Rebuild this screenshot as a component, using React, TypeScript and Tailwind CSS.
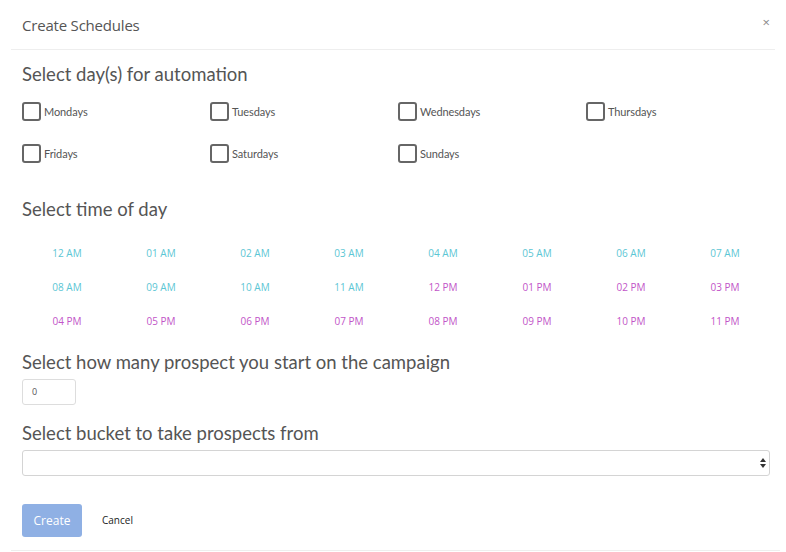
import React from "react";

const days1 = ["Mondays", "Tuesdays", "Wednesdays", "Thursdays"];
const days2 = ["Fridays", "Saturdays", "Sundays"];
const times = [
  "12 AM","01 AM","02 AM","03 AM","04 AM","05 AM","06 AM","07 AM",
  "08 AM","09 AM","10 AM","11 AM","12 PM","01 PM","02 PM","03 PM",
  "04 PM","05 PM","06 PM","07 PM","08 PM","09 PM","10 PM","11 PM",
];

const heading = "text-[18.5px] text-[#555555] leading-[24px]";
const lato = { fontFamily: 'Lato, "Open Sans", sans-serif' };

function Day({ label }: { label: string }) {
  return (
    <div className="flex items-center h-[20px]">
      <span className="w-[19px] h-[19px] border-2 border-[#666666] rounded-[3px] box-border" />
      <span className="ml-[3px] text-[11px] text-[#555555] leading-none tracking-[-0.1px]" style={lato}>{label}</span>
    </div>
  );
}

export default function App() {
  return (
    <div
      className="w-[786px] h-[552px] bg-white relative overflow-hidden"
      style={{ fontFamily: '"Open Sans", "Noto Sans", sans-serif' }}
    >
      <div className="h-[50px] mx-[11px] border-b border-[#eeeeee] flex items-center px-[11px] relative">
        <span className="text-[15px] text-[#555555] tracking-[-0.2px] mt-[1px]">Create Schedules</span>
        <span className="absolute right-[5px] top-[13px] text-[13px] text-[#888888]">×</span>
      </div>
      <div className="px-[22px]">
        <div className={`mt-[12px] ${heading}`} style={lato}>Select day(s) for automation</div>
        <div className="grid grid-cols-4 w-[752px] mt-[15px]">
          {days1.map((d) => <Day key={d} label={d} />)}
        </div>
        <div className="grid grid-cols-4 w-[752px] mt-[22px]">
          {days2.map((d) => <Day key={d} label={d} />)}
        </div>
        <div className={`mt-[34px] ${heading}`} style={lato}>Select time of day</div>
        <div className="grid grid-cols-8 w-[752px] -ml-[2px] mt-[25px] gap-y-[20px]">
          {times.map((t) => (
            <div
              key={t}
              className={`text-center text-[10px] leading-[14px] ${t.endsWith("AM") ? "text-[#5cc6d4]" : "text-[#c255c8]"}`}
            >
              {t}
            </div>
          ))}
        </div>
        <div className={`mt-[22px] ${heading}`} style={lato}>Select how many prospect you start on the campaign</div>
        <div className="mt-[5px] w-[54px] h-[26px] border border-[#dddddd] rounded-[3px] flex items-center px-[9px] text-[9px] text-[#555555]">0</div>
        <div className={`mt-[16px] ${heading}`} style={lato}>Select bucket to take prospects from</div>
        <div className="mt-[5px] w-[748px] h-[26px] border border-[#d4d4d4] rounded-[3px] flex items-center justify-end pr-[3px]">
          <svg width="6" height="10" viewBox="0 0 6 10">
            <path d="M3 0 L6 4 L0 4 Z" fill="#333" />
            <path d="M3 10 L6 6 L0 6 Z" fill="#333" />
          </svg>
        </div>
        <div className="mt-[28px] flex items-center">
          <div className="w-[60px] h-[33px] rounded-[3px] bg-[#8fb0e4] text-white text-[12px] flex items-center justify-center">Create</div>
          <span className="ml-[20px] text-[10px] text-[#222222]">Cancel</span>
        </div>
      </div>
      <div className="absolute left-[11px] right-[6px] top-[550px] border-t border-[#eeeeee]" />
    </div>
  );
}
